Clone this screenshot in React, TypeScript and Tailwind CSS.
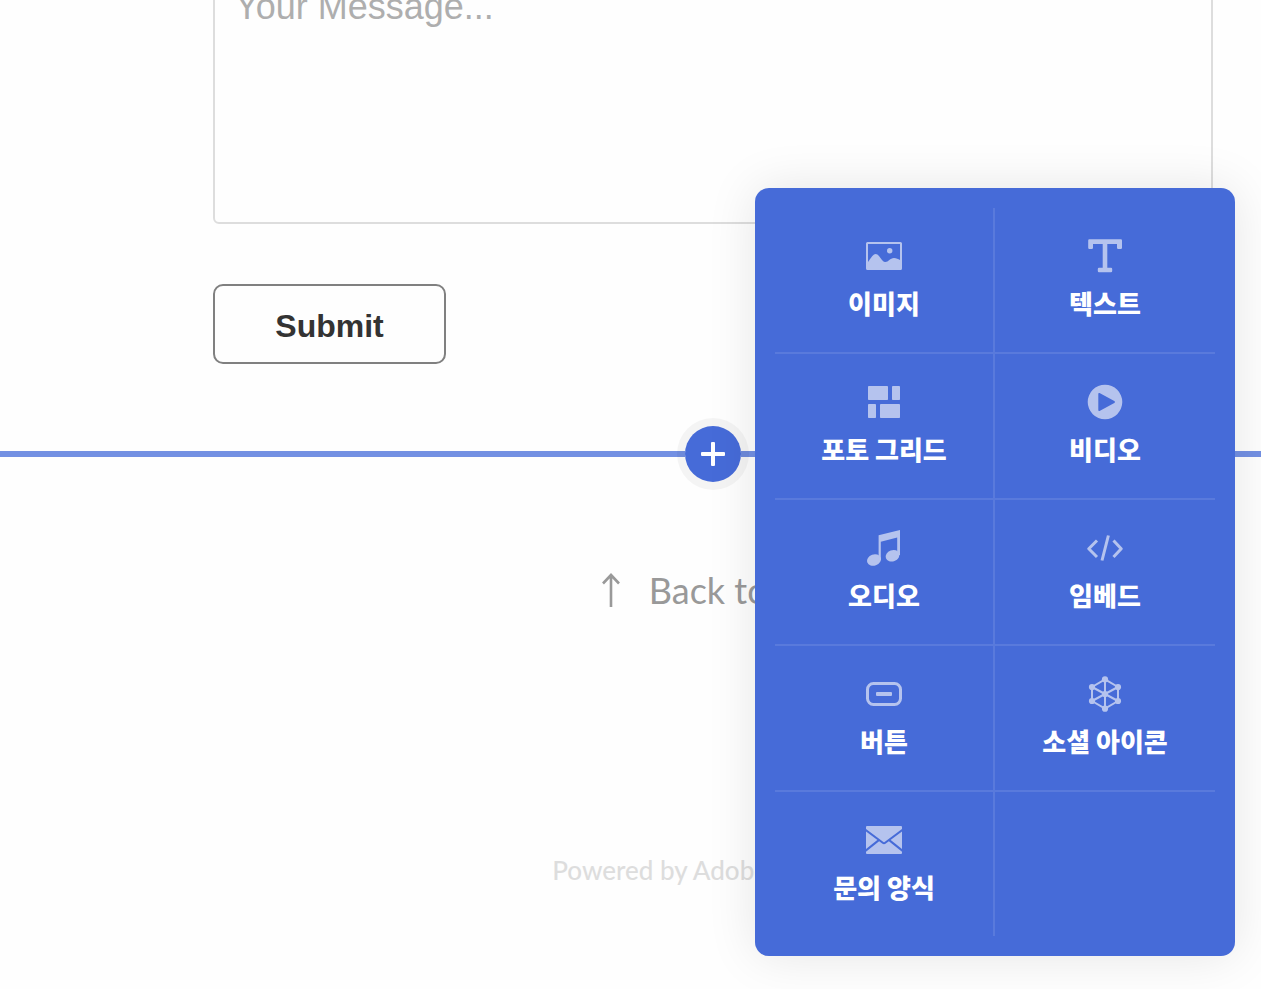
import type { ReactNode } from 'react';

type Module = {
  label: string;
  icon: ReactNode;
};

const modules: Module[] = [
  {
    label: '이미지',
    icon: (
      <>
        <rect x="1" y="5" width="34" height="26" rx="0.5" fill="none" stroke="currentColor" strokeWidth="2" />
        <circle cx="23.7" cy="12.7" r="2.7" />
        <path d="M2 24C5 20 7 16 9.7 16C13.5 16 15.5 24 19.3 24C22.5 24 24 20 28 20C30.5 20 32 21 34 22V31H2Z" />
      </>
    ),
  },
  {
    label: '텍스트',
    icon: (
      <path d="M2.3 1.3H33.7A1.2 1.2 0 0 1 35 2.5V9.8A1.2 1.2 0 0 1 33.8 11H31.2A1.2 1.2 0 0 1 30 9.8V6H20.3V29.7H24A1.2 1.2 0 0 1 25.2 30.9V33.1A1.2 1.2 0 0 1 24 34.3H12A1.2 1.2 0 0 1 10.8 33.1V30.9A1.2 1.2 0 0 1 12 29.7H15.7V6H6V9.8A1.2 1.2 0 0 1 4.8 11H2.4A1.2 1.2 0 0 1 1.2 9.8V2.5A1.2 1.2 0 0 1 2.3 1.3Z" />
    ),
  },
  {
    label: '포토 그리드',
    icon: (
      <>
        <rect x="2" y="2" width="20" height="14" rx="0.8" />
        <rect x="26" y="2" width="8" height="14" rx="0.8" />
        <rect x="2" y="20" width="8" height="14" rx="0.8" />
        <rect x="14" y="20" width="20" height="14" rx="0.8" />
      </>
    ),
  },
  {
    label: '비디오',
    icon: (
      <path
        fillRule="evenodd"
        d="M18 0.7A17.3 17.3 0 1 1 18 35.3A17.3 17.3 0 1 1 18 0.7ZM13 9.2C12 8.6 11.3 9.1 11.3 10.2V25.8C11.3 26.9 12 27.4 13 26.8L27.3 18.9C28.2 18.4 28.2 17.6 27.3 17.1Z"
      />
    ),
  },
  {
    label: '오디오',
    icon: (
      <>
        <path d="M12.6 5.3L34 0V25H31.2V7.6L14.8 11.8V30H12.6Z" />
        <ellipse cx="8" cy="30" rx="7.1" ry="5.6" transform="rotate(-20 8 30)" />
        <ellipse cx="26.6" cy="25.7" rx="7.1" ry="5.6" transform="rotate(-20 26.6 25.7)" />
      </>
    ),
  },
  {
    label: '임베드',
    icon: (
      <path
        d="M10 10.5L1.8 18.8L10 27M26.5 10.5L34.2 18.8L26.5 27M21.4 5.5L15 30.5"
        fill="none"
        stroke="currentColor"
        strokeWidth="3"
        strokeLinejoin="round"
      />
    ),
  },
  {
    label: '버튼',
    icon: (
      <>
        <rect x="1.5" y="7.5" width="33" height="21" rx="6" fill="none" stroke="currentColor" strokeWidth="3" />
        <rect x="10" y="16" width="16" height="4" rx="1" />
      </>
    ),
  },
  {
    label: '소셜 아이콘',
    icon: (
      <>
        <path
          d="M18 3.3L31 11V25L18 32.7L5 25V11ZM18 3.3V32.7M5 11L31 25M31 11L5 25"
          fill="none"
          stroke="currentColor"
          strokeWidth="2"
        />
        <circle cx="18" cy="3.3" r="3.1" />
        <circle cx="31" cy="11" r="3.1" />
        <circle cx="31" cy="25" r="3.1" />
        <circle cx="18" cy="32.7" r="3.1" />
        <circle cx="5" cy="25" r="3.1" />
        <circle cx="5" cy="11" r="3.1" />
        <circle cx="18" cy="18" r="3.1" />
      </>
    ),
  },
  {
    label: '문의 양식',
    icon: (
      <>
        <rect x="0" y="4" width="36" height="28" rx="1" />
        <path
          d="M-1 7.6L16.8 20.8Q18 21.8 19.2 20.8L37 7.6M-1 29.2L12.5 18.4M37 29.2L23.5 18.4"
          fill="none"
          stroke="#466bd8"
          strokeWidth="2"
        />
      </>
    ),
  },
];

function ModuleMenu() {
  return (
    <div className="absolute -top-[238px] left-[70px] w-[480px] rounded-[14px] bg-[#466bd8] p-5 shadow-[0_0_50px_rgba(0,0,0,0.1)]">
      <ul className="grid grid-cols-2">
        {modules.map((item, i) => (
          <li
            key={item.label}
            className={`border-white/10 ${i % 2 === 0 ? 'border-r-2' : ''} ${i < 8 ? 'border-b-2' : ''}`}
          >
            <button type="button" className="flex h-36 w-full flex-col items-center gap-3 pt-[30px]">
              <svg viewBox="0 0 36 36" className="size-9 text-[#b5c3ee]" fill="currentColor" aria-hidden="true">
                {item.icon}
              </svg>
              <span className="font-['Noto_Sans_CJK_KR',sans-serif] text-[26px] leading-[34px] font-black text-white">
                {item.label}
              </span>
            </button>
          </li>
        ))}
      </ul>
    </div>
  );
}

export default function App() {
  return (
    <div className="min-h-screen overflow-hidden bg-[#fefefe]">
      {/* The page canvas runs wider than the viewport */}
      <div className="w-[calc(100%+165px)] pb-[103px]">
        <form className="-mt-10 px-[213px]">
          <textarea
            aria-label="Your Message"
            placeholder="Your Message..."
            className="block h-[264px] w-full resize-none rounded-md border-2 border-[#dddddd] px-5 py-[25px] font-['Liberation_Sans',sans-serif] text-4xl placeholder:text-[#aeaeae]"
          />
          <button
            type="button"
            className="mt-[60px] block h-20 w-[233px] rounded-[10px] border-2 border-[#808080] pt-1 font-['Liberation_Sans',sans-serif] text-[32px] leading-9 font-bold text-[#333333]"
          >
            Submit
          </button>
        </form>

        {/* Insert line */}
        <div className="mt-[62px] flex items-center">
          <div className="h-1.5 flex-1 bg-[#7390e3]" />
          <div className="relative z-10 size-14">
            <button
              type="button"
              aria-label="Add module"
              className="flex size-14 items-center justify-center rounded-full bg-[#466bd8] text-white shadow-[0_0_0_8px_rgba(0,0,0,0.04)]"
            >
              <svg viewBox="0 0 24 24" className="size-6" fill="currentColor" aria-hidden="true">
                <rect x="0" y="10" width="24" height="4" rx="1" />
                <rect x="10" y="0" width="4" height="24" rx="1" />
              </svg>
            </button>
            <ModuleMenu />
          </div>
          <div className="h-1.5 flex-1 bg-[#7390e3]" />
        </div>

        <a
          href="#"
          className="mt-[84px] flex items-center justify-center gap-7 pl-2 font-['Lato',sans-serif] text-4xl leading-[48px] text-[#999999]"
        >
          <svg viewBox="0 0 20 34" className="h-[34px] w-5" fill="none" stroke="currentColor" strokeWidth="2.6" aria-hidden="true">
            <path d="M10 34V2M2 10.5L10 2L18 10.5" />
          </svg>
          Back to Top
        </a>
        <footer className="mt-60 text-center font-['Lato',sans-serif] text-[26px] leading-8 font-medium text-[#dddddd]">
          Powered by <a href="#">Adobe Portfolio</a>
        </footer>
      </div>
    </div>
  );
}
